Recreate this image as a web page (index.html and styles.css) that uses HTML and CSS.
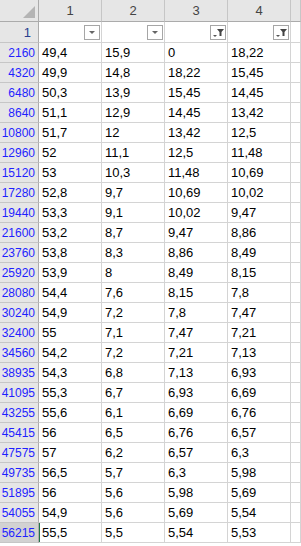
FILE: index.html
```html
<!DOCTYPE html>
<html>
<head>
<meta charset="utf-8">
<link rel="stylesheet" href="styles.css">
</head>
<body>
<div class="sheet">
  <div class="corner"><span class="corner-tri"></span></div>
  <div class="colhead">1</div>
  <div class="colhead">2</div>
  <div class="colhead">3</div>
  <div class="colhead">4</div>
  <div class="colhead last"></div>

  <div class="rowhead first">1</div>
  <div class="cell fcell"><span class="fbtn"><svg width="14" height="13" viewBox="0 0 14 13"><polygon points="4,5 10,5 7,8" fill="#666"/></svg></span></div>
  <div class="cell fcell"><span class="fbtn"><svg width="14" height="13" viewBox="0 0 14 13"><polygon points="4,5 10,5 7,8" fill="#666"/></svg></span></div>
  <div class="cell fcell"><span class="fbtn"><svg width="14" height="13" viewBox="0 0 14 13"><polygon points="2,9 6,9 4,11" fill="#555"/><polygon points="6,3 13,3 10.5,6 10.5,10 8.5,10 8.5,6" fill="#444"/></svg></span></div>
  <div class="cell fcell"><span class="fbtn"><svg width="14" height="13" viewBox="0 0 14 13"><polygon points="2,9 6,9 4,11" fill="#555"/><polygon points="6,3 13,3 10.5,6 10.5,10 8.5,10 8.5,6" fill="#444"/></svg></span></div>
  <div class="cell last"></div>

  <div class="rowhead">2160</div><div class="cell">49,4</div><div class="cell">15,9</div><div class="cell">0</div><div class="cell">18,22</div><div class="cell last"></div>
  <div class="rowhead">4320</div><div class="cell">49,9</div><div class="cell">14,8</div><div class="cell">18,22</div><div class="cell">15,45</div><div class="cell last"></div>
  <div class="rowhead">6480</div><div class="cell">50,3</div><div class="cell">13,9</div><div class="cell">15,45</div><div class="cell">14,45</div><div class="cell last"></div>
  <div class="rowhead">8640</div><div class="cell">51,1</div><div class="cell">12,9</div><div class="cell">14,45</div><div class="cell">13,42</div><div class="cell last"></div>
  <div class="rowhead">10800</div><div class="cell">51,7</div><div class="cell">12</div><div class="cell">13,42</div><div class="cell">12,5</div><div class="cell last"></div>
  <div class="rowhead">12960</div><div class="cell">52</div><div class="cell">11,1</div><div class="cell">12,5</div><div class="cell">11,48</div><div class="cell last"></div>
  <div class="rowhead">15120</div><div class="cell">53</div><div class="cell">10,3</div><div class="cell">11,48</div><div class="cell">10,69</div><div class="cell last"></div>
  <div class="rowhead">17280</div><div class="cell">52,8</div><div class="cell">9,7</div><div class="cell">10,69</div><div class="cell">10,02</div><div class="cell last"></div>
  <div class="rowhead">19440</div><div class="cell">53,3</div><div class="cell">9,1</div><div class="cell">10,02</div><div class="cell">9,47</div><div class="cell last"></div>
  <div class="rowhead">21600</div><div class="cell">53,2</div><div class="cell">8,7</div><div class="cell">9,47</div><div class="cell">8,86</div><div class="cell last"></div>
  <div class="rowhead">23760</div><div class="cell">53,8</div><div class="cell">8,3</div><div class="cell">8,86</div><div class="cell">8,49</div><div class="cell last"></div>
  <div class="rowhead">25920</div><div class="cell">53,9</div><div class="cell">8</div><div class="cell">8,49</div><div class="cell">8,15</div><div class="cell last"></div>
  <div class="rowhead">28080</div><div class="cell">54,4</div><div class="cell">7,6</div><div class="cell">8,15</div><div class="cell">7,8</div><div class="cell last"></div>
  <div class="rowhead">30240</div><div class="cell">54,9</div><div class="cell">7,2</div><div class="cell">7,8</div><div class="cell">7,47</div><div class="cell last"></div>
  <div class="rowhead">32400</div><div class="cell">55</div><div class="cell">7,1</div><div class="cell">7,47</div><div class="cell">7,21</div><div class="cell last"></div>
  <div class="rowhead">34560</div><div class="cell">54,2</div><div class="cell">7,2</div><div class="cell">7,21</div><div class="cell">7,13</div><div class="cell last"></div>
  <div class="rowhead">38935</div><div class="cell">54,3</div><div class="cell">6,8</div><div class="cell">7,13</div><div class="cell">6,93</div><div class="cell last"></div>
  <div class="rowhead">41095</div><div class="cell">55,3</div><div class="cell">6,7</div><div class="cell">6,93</div><div class="cell">6,69</div><div class="cell last"></div>
  <div class="rowhead">43255</div><div class="cell">55,6</div><div class="cell">6,1</div><div class="cell">6,69</div><div class="cell">6,76</div><div class="cell last"></div>
  <div class="rowhead">45415</div><div class="cell">56</div><div class="cell">6,5</div><div class="cell">6,76</div><div class="cell">6,57</div><div class="cell last"></div>
  <div class="rowhead">47575</div><div class="cell">57</div><div class="cell">6,2</div><div class="cell">6,57</div><div class="cell">6,3</div><div class="cell last"></div>
  <div class="rowhead">49735</div><div class="cell">56,5</div><div class="cell">5,7</div><div class="cell">6,3</div><div class="cell">5,98</div><div class="cell last"></div>
  <div class="rowhead">51895</div><div class="cell">56</div><div class="cell">5,6</div><div class="cell">5,98</div><div class="cell">5,69</div><div class="cell last"></div>
  <div class="rowhead">54055</div><div class="cell">54,9</div><div class="cell">5,6</div><div class="cell">5,69</div><div class="cell">5,54</div><div class="cell last"></div>
  <div class="rowhead selected">56215</div><div class="cell sel-left">55,5</div><div class="cell">5,5</div><div class="cell">5,54</div><div class="cell">5,53</div><div class="cell last"></div>
</div>
</body>
</html>
```

FILE: styles.css
```css
html, body {
  margin: 0;
  padding: 0;
  background: #ffffff;
  overflow: hidden;
}

.sheet {
  display: grid;
  grid-template-columns: 39px 63px 63px 63px 63px 1fr;
  grid-template-rows: 22px 21px;
  grid-auto-rows: 20px;
  width: 301px;
  font-family: "Liberation Sans", Arial, sans-serif;
  font-size: 13px;
}

.sheet > div {
  box-sizing: border-box;
  border-right: 1px solid #d4d4d4;
  border-bottom: 1px solid #d4d4d4;
  overflow: hidden;
  white-space: nowrap;
}

.corner {
  background: #e6e6e6;
  position: relative;
  border-right-color: #ababab !important;
  border-bottom-color: #ababab !important;
}

.corner-tri {
  position: absolute;
  right: 3px;
  bottom: 3px;
  width: 0;
  height: 0;
  border-left: 12px solid transparent;
  border-bottom: 12px solid #b4b4b4;
}

.colhead {
  background: #e6e6e6;
  color: #444;
  text-align: center;
  line-height: 22px;
  font-size: 13px;
  border-right-color: #c6c6c6 !important;
  border-bottom-color: #ababab !important;
}

.rowhead {
  background: #e6e6e6;
  color: #1f1fff;
  text-align: right;
  padding-right: 3px;
  font-size: 12px;
  line-height: 20px;
  border-right-color: #ababab !important;
  border-bottom-color: #c6c6c6 !important;
}

.rowhead.first {
  color: #2a3f8f;
  line-height: 21px;
  padding-right: 7px;
  font-size: 13px;
}

.rowhead.selected {
  background: #d2d2d2;
}

.cell {
  color: #000;
  padding-left: 3px;
  line-height: 20px;
}

.sel-left {
  box-shadow: inset 1px 0 0 #217346;
}

.fcell {
  display: flex;
  justify-content: flex-end;
  align-items: center;
  padding-right: 1px;
}

.fbtn {
  box-sizing: border-box;
  width: 16px;
  height: 15px;
  border: 1px solid #a6a6a6;
  background: #fff;
  display: flex;
  align-items: center;
  justify-content: center;
}

.fbtn svg {
  display: block;
}
```
